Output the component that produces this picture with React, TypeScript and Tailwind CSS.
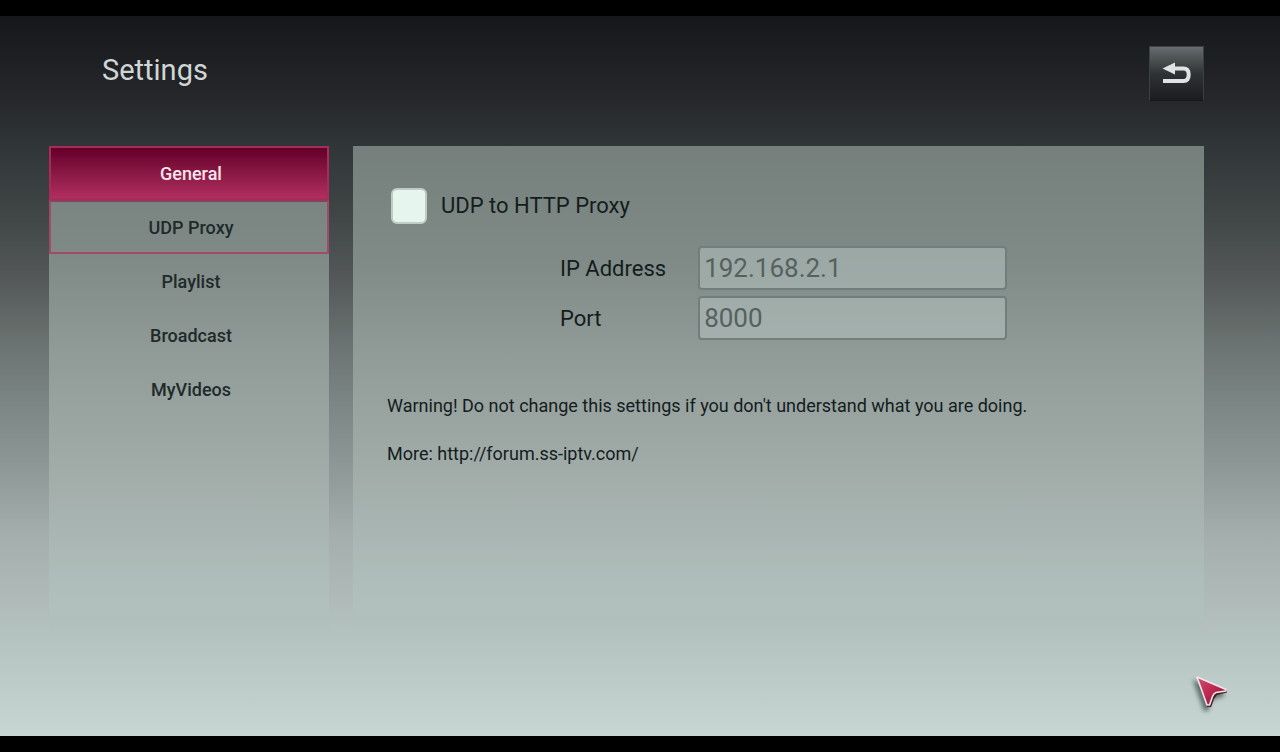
import { useState } from 'react';

const sections = ['General', 'UDP Proxy', 'Playlist', 'Broadcast', 'MyVideos'];

function BackIcon() {
  return (
    <svg viewBox="0 0 30 24" className="w-[30px] h-6" fill="none" aria-hidden="true">
      <path d="M12 6.5H21.5C25 6.5 26.7 8.5 26.7 12.5S25 19 21.5 19H1" stroke="#dfe3e3" strokeWidth="4" />
      <path d="M0.5 6.5L13 0.5V12.5Z" fill="#dfe3e3" />
    </svg>
  );
}

function Pointer() {
  return (
    <svg
      viewBox="0 0 40 44"
      className="absolute right-[50px] bottom-5 w-10 h-11 pointer-events-none drop-shadow-[-3px_4px_2px_rgba(30,50,50,0.6)]"
      aria-hidden="true"
    >
      <defs>
        <linearGradient id="pointer" x1="0" y1="0" x2="1" y2="1">
          <stop offset="0" stopColor="#d0506f" />
          <stop offset="0.5" stopColor="#bb2750" />
          <stop offset="1" stopColor="#8d1238" />
        </linearGradient>
      </defs>
      <path d="M8 6L37 18V20.500L27 23L24 27L21 35H17Z" fill="#43202b" />
      <path
        d="M7 5L36 17.500V19L26 20.500Q23.500 21.500 22.500 24.500L19.500 33H17Z"
        fill="url(#pointer)"
        stroke="#f3e6e8"
        strokeWidth="1.6"
        strokeLinejoin="round"
      />
    </svg>
  );
}

const panel =
  'bg-[linear-gradient(to_bottom,#75807d_0%,#808a87_24%,#919b98_43%,#9faaa7_63%,#aab6b3_80%,#aebdb9_88%,#b1c0bc_94%,transparent_100%)]';

const inputStyle =
  'w-[309px] h-11 px-1 rounded-sm border-2 border-[#717e7b] bg-[#b8c8c4]/50 text-[26px] leading-8 text-[#56615f] outline-none';

export default function App() {
  const [active, setActive] = useState('General');
  const [proxy, setProxy] = useState(false);
  const [ip, setIp] = useState('192.168.2.1');
  const [port, setPort] = useState('8000');

  return (
    <div className="flex flex-col min-h-screen py-4 bg-black font-[Roboto,sans-serif]">
      <div className="relative flex flex-col flex-1 pl-[49px] pr-[76px] bg-[linear-gradient(to_bottom,#16171b_0%,#26282b_12%,#303637_18%,#3f4445_27%,#555959_37%,#697270_45%,#7c8684_54%,#929d9c_65%,#a3aead_72%,#b1bcba_82%,#b5c4c0_87%,#c8d6d3_100%)]">
        {/* Header */}
        <header className="flex justify-between pl-[53px] pt-[30px]">
          <h1 className="pt-1 text-[29px] leading-10 text-[#d0d6d6]">Settings</h1>
          <button
            aria-label="Back"
            className="flex items-center justify-center w-[55px] h-[55px] border border-[#3b4143] border-b-[#17181b] bg-linear-to-b from-[#666d6d] via-[#303335] to-[#1b1c1f]"
          >
            <BackIcon />
          </button>
        </header>

        <div className="grid grid-cols-[280px_1fr] gap-6 flex-1 mt-[45px] mb-[100px]">
          {/* Sections */}
          <nav className={`flex flex-col ${panel}`}>
            {sections.map((name) => (
              <button
                key={name}
                onClick={() => setActive(name)}
                className={
                  'h-[54px] pl-2 pr-1 pt-0.5 text-lg font-medium border-2 ' +
                  (name === active
                    ? 'text-[#f5e6ec] border-[#a82c59] bg-linear-to-b from-[#64002a] to-[#b02e60]'
                    : name === 'UDP Proxy'
                      ? 'text-[#202a2a] border-[#a04c69] border-t-[#8c3f5b]'
                      : 'text-[#202a2a] border-transparent')
                }
              >
                {name}
              </button>
            ))}
          </nav>

          {/* Settings for the selected section */}
          <main className={`px-[34px] pt-10 text-[#141d1d] ${panel}`}>
            <label className="flex items-center gap-[14px] pl-1 text-[22px] leading-10">
              <input
                type="checkbox"
                checked={proxy}
                onChange={(e) => setProxy(e.target.checked)}
                className="w-9 h-9 rounded-md appearance-none bg-[#e6f5ee] border-2 border-[#bdcdc6] checked:bg-[#b02e60]"
              />
              UDP to HTTP Proxy
            </label>

            <div className="grid grid-cols-[auto_1fr] items-center gap-x-8 gap-y-1.5 mt-5 pl-[173px] text-[22px]">
              <label htmlFor="ip">IP Address</label>
              <input id="ip" value={ip} onChange={(e) => setIp(e.target.value)} className={inputStyle} />
              <label htmlFor="port">Port</label>
              <input id="port" value={port} onChange={(e) => setPort(e.target.value)} className={inputStyle} />
            </div>

            <p className="mt-[54px] text-lg leading-6">
              Warning! Do not change this settings if you don't understand what you are doing.
            </p>
            <p className="mt-6 text-lg leading-6">
              More: <a href="http://forum.ss-iptv.com/">http://forum.ss-iptv.com/</a>
            </p>
          </main>
        </div>

        <Pointer />
      </div>
    </div>
  );
}
